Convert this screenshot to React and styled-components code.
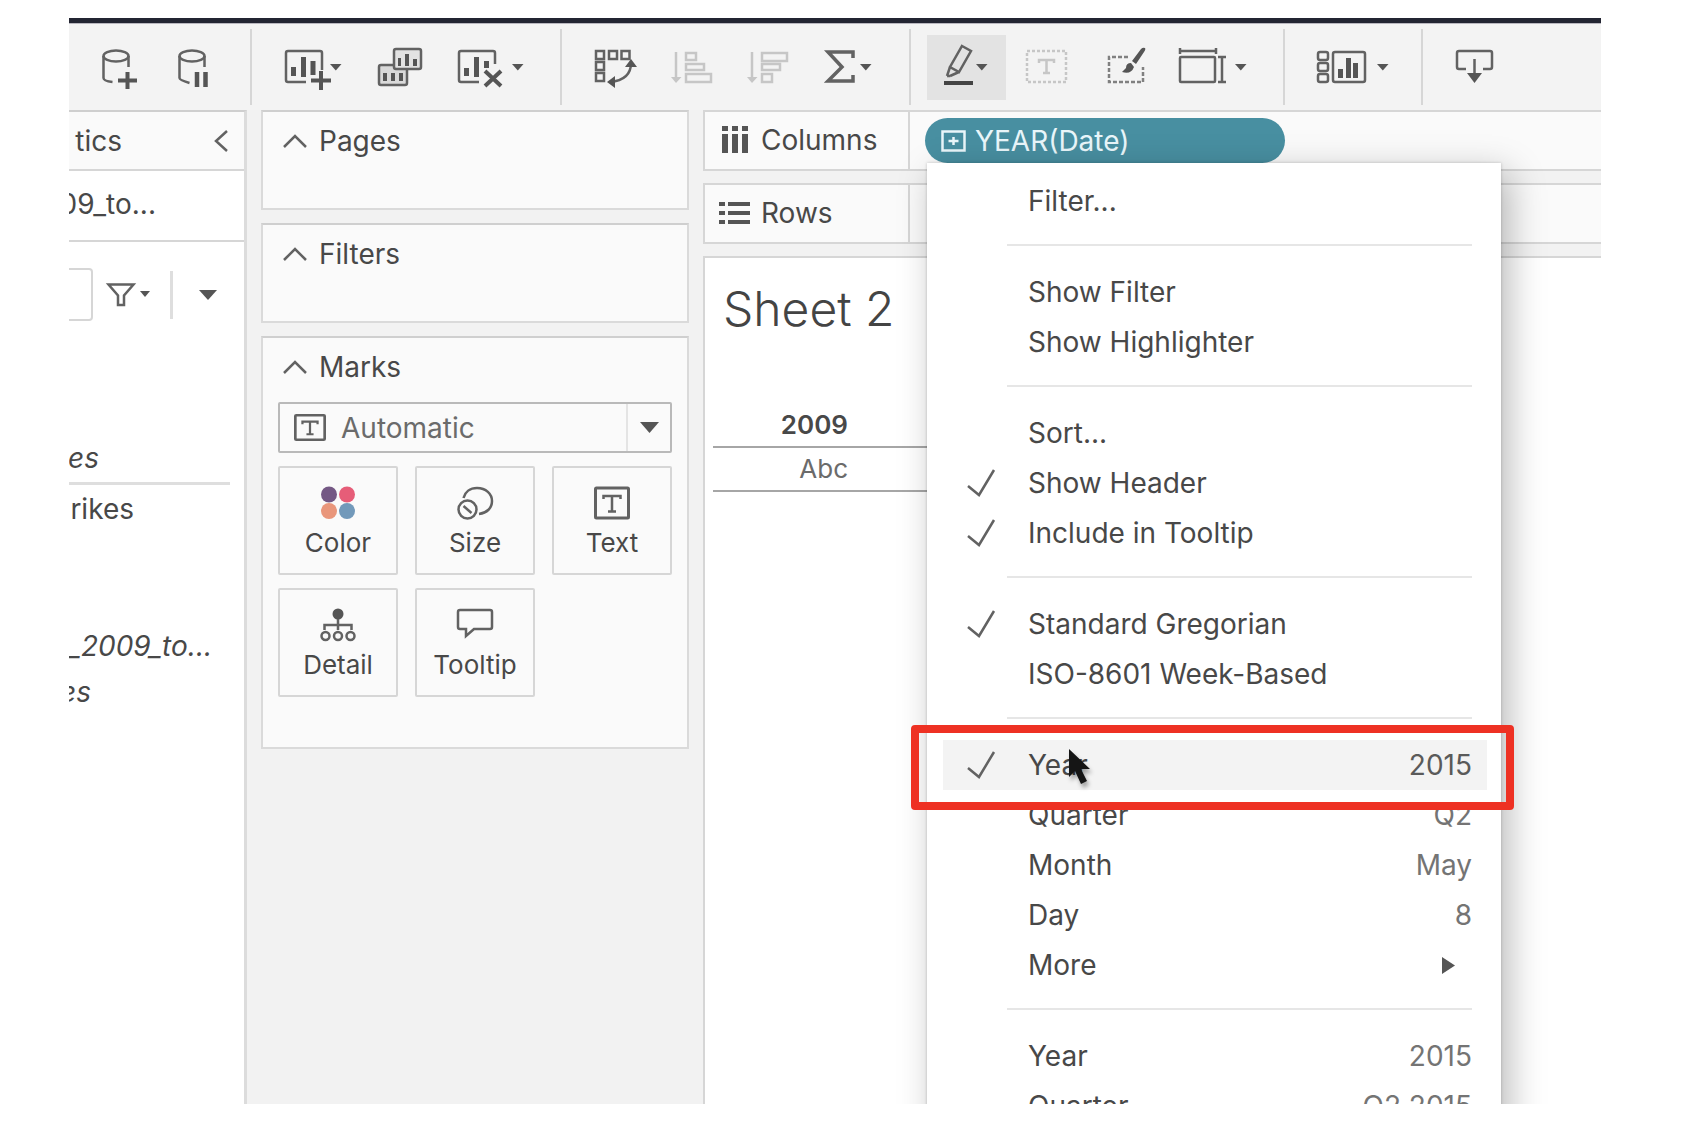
import React from "react";
import styled, { createGlobalStyle, css } from "styled-components";

const ink = "#484848";
const faint = "#c6c6c6";
const line = "#d6d6d6";

const GlobalStyle = createGlobalStyle`
  * { box-sizing: border-box; }
  body { margin: 0; background: #fff; }
  button, select, input, table { font: inherit; color: inherit; }
`;

const Frame = styled.div`
  display: flex;
  flex-direction: column;
  height: calc(100vh - 44px);
  margin: 18px 81px 26px 69px;
  overflow: hidden;
  background: #f2f2f2;
  border-top: 5px solid #232532;
  color: ${ink};
  font-family: Inter, "Liberation Sans", sans-serif;
  font-size: 28px;
  line-height: 34px;
`;

/* Toolbar */

const Toolbar = styled.header`
  display: flex;
  align-items: center;
  flex: none;
  height: 87px;
  border-top: 1px solid #b9b7bf;
  background: #f3f3f3;
`;

const ToolGroup = styled.div`
  display: flex;
  align-items: center;
  height: 76px;
  padding: 0 ${(p) => p.$end}px 0 ${(p) => p.$start}px;
  border-right: ${(p) => (p.$last ? "0" : `2px solid ${line}`)};
`;

const ToolButton = styled.button`
  display: flex;
  align-items: center;
  height: 65px;
  padding: 0 17px;
  border: 0;
  background: ${(p) => (p.$active ? "#e3e3e3" : "transparent")};
`;

const Glyph = styled.svg`
  display: block;
  flex: none;
  fill: none;
  stroke: ${(p) => p.$tone || "#626262"};
  stroke-width: 2.5;
  overflow: visible;
  .solid { fill: ${(p) => p.$tone || "#555"}; stroke: none; }
`;

const Tool = ({ label, w, active, tone, children }) => (
  <ToolButton type="button" aria-label={label} $active={active}>
    <Glyph width={w} height="44" viewBox={`0 0 ${w} 44`} $tone={tone}>
      {children}
    </Glyph>
  </ToolButton>
);

const Caret = ({ x }) => (
  <path className="solid" d={`M${x} 19h11.5l-5.7 6.5z`} />
);

/* Workspace columns */

const Workspace = styled.main`
  display: flex;
  flex: 1;
  min-height: 0;
`;

const DataPane = styled.aside`
  display: flex;
  flex-direction: column;
  flex: none;
  width: 178px;
  border-top: 2px solid #cfcfcf;
  border-right: 3px solid #dcdcdc;
  background: #fff;
  overflow: hidden;
`;

const PaneRow = styled.div`
  display: flex;
  align-items: center;
  justify-content: space-between;
  height: ${(p) => p.$h}px;
  padding: 0 16px ${(p) => (p.$shade ? 0 : 4)}px 0;
  border-bottom: 2px solid ${line};
  background: ${(p) => (p.$shade ? "#fafafa" : "#fff")};
`;

const Clip = styled.span`
  display: flex;
  justify-content: flex-end;
  flex: none;
  width: ${(p) => p.$w}px;
  overflow: hidden;
  font-style: ${(p) => (p.$italic ? "italic" : "normal")};
  white-space: nowrap;
`;

const IconButton = styled.button`
  display: flex;
  align-items: center;
  justify-content: center;
  padding: 0;
  border: 0;
  background: transparent;
`;

const SearchRow = styled.div`
  display: flex;
  align-items: center;
  height: 53px;
  margin-top: 26px;
`;

const SearchBox = styled.input`
  width: 24px;
  height: 53px;
  padding: 0;
  border: 2px solid ${line};
  border-left: 0;
  border-radius: 0 4px 4px 0;
  background: #fff;
`;

const FilterButton = styled(IconButton)`
  margin-left: 14px;
`;

const ViewButton = styled(IconButton)`
  height: 48px;
  margin-left: 19px;
  padding-left: 26px;
  border-left: 3px solid #dedede;
`;

const FieldList = styled.ul`
  display: flex;
  flex-direction: column;
  margin: 117px 14px 0 0;
  padding: 0;
  list-style: none;
`;

const Field = styled.li`
  display: flex;
  align-items: center;
  height: ${(p) => p.$h}px;
  padding-bottom: ${(p) => (p.$ruled ? 4 : 0)}px;
  border-bottom: ${(p) => (p.$ruled ? "3px solid #dedede" : "0")};
`;

const Cards = styled.section`
  display: flex;
  flex-direction: column;
  gap: 13px;
  flex: none;
  width: 428px;
  margin-left: 14px;
`;

const Card = styled.section`
  min-height: 100px;
  padding: 12px 15px ${(p) => (p.$tall ? 50 : 12)}px;
  border: 2px solid #dadada;
  border-top-color: #cfcfcf;
  background: #fafafa;
`;

const CardTitle = styled.h2`
  display: flex;
  align-items: center;
  gap: 12px;
  margin: 0;
  padding-left: 5px;
  font-size: 28px;
  font-weight: 400;
`;

const MarkType = styled.label`
  display: flex;
  align-items: center;
  height: 51px;
  margin-top: 18px;
  padding-left: 14px;
  border: 2px solid #b9b9b9;
  border-radius: 2px;
  color: #6b6b6b;
`;

const MarkSelect = styled.select`
  flex: 1;
  min-width: 0;
  margin-left: 15px;
  padding: 0;
  border: 0;
  appearance: none;
  background: transparent;
`;

const SelectArrow = styled.span`
  display: flex;
  align-items: center;
  justify-content: center;
  width: 44px;
  height: 47px;
  border-left: 2px solid #e4e4e4;
`;

const MarkGrid = styled.div`
  display: grid;
  grid-template-columns: repeat(3, 1fr);
  gap: 13px 17px;
  margin-top: 13px;
`;

const MarkButton = styled.button`
  display: flex;
  flex-direction: column;
  align-items: center;
  gap: 7px;
  height: 109px;
  padding: 18px 0 0;
  border: 2px solid ${line};
  border-radius: 2px;
  background: #fafafa;
  font-size: 26px;
  line-height: 32px;
`;

/* Shelves and sheet */

const Canvas = styled.section`
  display: flex;
  flex-direction: column;
  gap: 12px;
  flex: 1;
  min-width: 0;
  margin-left: 14px;
`;

const Shelf = styled.div`
  display: flex;
  flex: none;
  height: 61px;
  border: 2px solid ${line};
  border-right: 0;
  background: #fafafa;
`;

const ShelfLabel = styled.div`
  display: flex;
  align-items: center;
  gap: 10px;
  width: 205px;
  padding: 0 0 2px 14px;
  border-right: 2px solid ${line};
`;

const ShelfDrop = styled.div`
  flex: 1;
  padding: 6px 0 0 15px;
`;

const PillAnchor = styled.div`
  position: relative;
  width: 360px;
`;

const Pill = styled.button`
  display: flex;
  align-items: center;
  gap: 9px;
  width: 100%;
  height: 45px;
  padding: 0 16px;
  border: 0;
  border-radius: 23px;
  background: #488fa1;
  color: #e9f6fa;
`;

const Sheet = styled.section`
  flex: 1;
  padding: 20px 0 0 8px;
  border: 2px solid ${line};
  border-right: 0;
  border-bottom: 0;
  background: #fff;
`;

const SheetTitle = styled.h1`
  margin: 0 0 63px;
  padding-left: 10px;
  color: #444;
  font-size: 48px;
  font-weight: 300;
  line-height: 62px;
`;

const Crosstab = styled.table`
  border-collapse: collapse;
  width: 290px;
  table-layout: fixed;
  font-size: 26px;
  text-align: right;
  th, td { height: 44px; padding: 0 10px 0 0; border-bottom: 2px solid #a6a6a6; }
  th { font-weight: 600; }
  td { color: #6b6b6b; }
`;

/* Context menu */

const Menu = styled.ul`
  position: absolute;
  z-index: 2;
  top: 100%;
  left: 2px;
  width: 574px;
  margin: 0;
  padding: 13px 14px 13px 16px;
  background: #fff;
  box-shadow: 0 0 3px rgba(0, 0, 0, 0.2), 8px 10px 34px rgba(0, 0, 0, 0.28);
  list-style: none;
`;

const MenuRow = styled.li`
  position: relative;
`;

const MenuItem = styled.button`
  display: grid;
  grid-template-columns: 61px 1fr auto;
  align-items: center;
  width: 100%;
  height: 50px;
  padding: 0 15px 0 24px;
  border: 0;
  background: ${(p) => (p.$hover ? "#f3f3f3" : "transparent")};
  text-align: left;
`;

const MenuValue = styled.span`
  padding-right: ${(p) => (p.$arrow ? "17px" : "0")};
  color: ${(p) => (p.$strong ? "#5a5a5a" : "#747474")};
`;

const MenuRule = styled.li`
  height: 2px;
  margin: 18px 15px 21px 64px;
  background: #e6e6e6;
`;

const overlay = css`
  position: absolute;
  pointer-events: none;
`;

const Callout = styled.div`
  ${overlay}
  z-index: 1;
  inset: -15px -27px -20px -32px;
  border: 8px solid #ee3123;
  border-radius: 4px;
`;

const Pointer = styled.svg`
  ${overlay}
  top: 9px;
  left: 125px;
  filter: drop-shadow(2px 4px 2px rgba(0, 0, 0, 0.35));
`;

const menu = [
  { label: "Filter..." },
  null,
  { label: "Show Filter" },
  { label: "Show Highlighter" },
  null,
  { label: "Sort..." },
  { label: "Show Header", checked: true },
  { label: "Include in Tooltip", checked: true },
  null,
  { label: "Standard Gregorian", checked: true },
  { label: "ISO-8601 Week-Based" },
  null,
  { label: "Year", checked: true, value: "2015", current: true },
  { label: "Quarter", value: "Q2" },
  { label: "Month", value: "May" },
  { label: "Day", value: "8" },
  { label: "More", submenu: true },
  null,
  { label: "Year", value: "2015" },
  { label: "Quarter", value: "Q2 2015" },
];

const Check = () => (
  <Glyph width="28" height="28" viewBox="0 0 28 28">
    <path d="M1 17l11 9L27 1" />
  </Glyph>
);

const TextGlyph = ({ w, h }) => (
  <Glyph width={w} height={h} viewBox="0 0 36 32" preserveAspectRatio="none">
    <rect x="1.5" y="1.5" width="33" height="29" rx="1" strokeWidth="3" />
    <path d="M9.5 12V9h17v3M18 9v15M14 24h8" />
  </Glyph>
);

const Chevron = () => (
  <Glyph width="24" height="14" viewBox="0 0 24 14">
    <path d="M1 13L12 2l11 11" />
  </Glyph>
);

const markButtons = [
  {
    label: "Color",
    icon: (
      <g stroke="none">
        <circle cx="9" cy="8.5" r="8" fill="#745884" />
        <circle cx="27" cy="8.5" r="8" fill="#e65d78" />
        <circle cx="9" cy="25" r="8" fill="#e9967b" />
        <circle cx="27" cy="25" r="8" fill="#7299ba" />
      </g>
    ),
  },
  {
    label: "Size",
    icon: (
      <>
        <circle cx="10.5" cy="23.5" r="9" />
        <path d="M6.5 20l8 7" />
        <path d="M6.500 12C8 6 13 2 20 2c9 0 15 6 15 13 0 7-5 12-13 13" />
      </>
    ),
  },
  {
    label: "Text",
    icon: (
      <>
        <rect x="1.5" y="2" width="33" height="30" rx="1" strokeWidth="3" />
        <path d="M9.5 13v-3h17v3M18 10v15M14 25.500h8" />
      </>
    ),
  },
  {
    label: "Detail",
    icon: (
      <>
        <circle className="solid" cx="18" cy="6" r="5.5" />
        <path d="M18 11v11M4.5 22v-5h27v5" />
        <circle cx="5.500" cy="28" r="4" />
        <circle cx="18" cy="28" r="4" />
        <circle cx="30.5" cy="28" r="4" />
      </>
    ),
  },
  {
    label: "Tooltip",
    icon: <path d="M3 2h30q2 0 2 2v15q0 2-2 2H17l-8 7v-7H3q-2 0-2-2V4q0-2 2-2z" />,
  },
];

const ToolbarIcons = () => (
  <Toolbar>
    <ToolGroup $start={16} $end={19}>
      <Tool label="New Data Source" w={42}>
        <ellipse cx="14" cy="11" rx="12.5" ry="5.5" />
        <path d="M1.5 11v22q0 3 9 4M26.5 11v11" />
        <path d="M16 35.5h19M25.5 27v17" strokeWidth="4" stroke="#555" />
      </Tool>
      <Tool label="Pause Auto Updates" w={36}>
        <ellipse cx="14" cy="11" rx="12.5" ry="5.5" />
        <path d="M1.5 11v22q0 2 10 5M26.5 11v11" />
        <path d="M19 27v15M27.5 27v15" strokeWidth="4.5" stroke="#555" />
      </Tool>
    </ToolGroup>
    <ToolGroup $start={14} $end={20}>
      <Tool label="New Worksheet" w={60}>
        <path d="M23 37H5q-2 0-2-2V8q0-2 2-2h32q2 0 2 2v17" />
        <path className="solid" d="M8 22h5v9H8zM18 12h5v20h-5zM27.5 16h5v14h-5z" />
        <path d="M28 35.5h20M38 26v19" strokeWidth="4" stroke="#555" />
        <Caret x={47} />
      </Tool>
      <Tool label="Duplicate" w={46}>
        <rect x="2" y="20" width="28" height="20" rx="2" fill="#d9d9d9" />
        <rect x="17" y="4" width="27" height="20" rx="2" fill="#e2e2e2" />
        <path className="solid" d="M21 13h3v8h-3zM28 9h4v12h-4zM36 14h4v7h-4zM6 28h4v8H6zM14 28h4v8h-4zM22 28h4v8h-4z" />
      </Tool>
      <Tool label="Clear Sheet" w={66}>
        <path d="M22 37H4q-2 0-2-2V8q0-2 2-2h32q2 0 2 2v11" />
        <path className="solid" d="M7 23h5v8H7zM17 12h5v20h-5zM27 16h5v7h-5z" />
        <path d="M28 26l16 15M44 26L28 41" strokeWidth="4" stroke="#555" />
        <Caret x={55} />
      </Tool>
    </ToolGroup>
    <ToolGroup $start={16} $end={19}>
      <Tool label="Swap Rows and Columns" w={42}>
        <path d="M1 6h8v8H1zM14 6h8v8h-8zM26.5 6h8v8h-8zM1 17h8v8H1zM1 28h8v8H1z" />
        <path d="M36 18q0 17-21 19" />
        <path className="solid" d="M36 14l6 8H30zM12 37l8-6v12z" />
      </Tool>
      <Tool label="Sort Ascending" w={42} tone={faint}>
        <path d="M5 7v28M15 8h10v7H15zM15 19h18v6H15zM15 29h25v8H15z" />
        <path className="solid" d="M0 32h10.5l-5.5 6z" />
      </Tool>
      <Tool label="Sort Descending" w={44} tone={faint}>
        <path d="M5 7v28M15 8h25v8H15zM15 19h18v6H15zM15 29h10v8H15z" />
        <path className="solid" d="M0 32h10.5l-5.5 6z" />
      </Tool>
      <Tool label="Totals" w={48}>
        <path d="M28 13V7H3l14 15L3 36h25v-6" strokeWidth="3.5" />
        <Caret x={35} />
      </Tool>
    </ToolGroup>
    <ToolGroup $start={16} $end={19}>
      <Tool label="Highlight" w={45} active>
        <path d="M18 1l9 5-12 21-9-5zM6 22l-3 9M15 27l-9 4M3 31h3" />
        <path d="M0 38h29" strokeWidth="4" stroke="#444" />
        <Caret x={32} />
      </Tool>
      <Tool label="Show Mark Labels" w={46} tone={faint}>
        <rect x="4" y="6" width="39" height="31" strokeDasharray="3 2" />
        <path d="M16 18v-3h15v3M23.5 15v13M20 28h7" />
      </Tool>
      <Tool label="Format Workbook" w={42}>
        <path d="M25 12H6v25h34V22" strokeDasharray="4 2" stroke="#808080" />
        <path className="solid" d="M42 3q-2-1-4 1l-9 12 4 3 8-12q2-3 1-4zM28 18q-5 0-5 5l-4 4q9 3 12-5z" />
      </Tool>
      <Tool label="Fit" w={68}>
        <path d="M1 6h36M1 3v6M37 3v6M2 12h33q1 0 1 1v23q0 1-1 1H2q-1 0-1-1V13q0-1 1-1zM43 12v25M39 12h8M39 37h8" />
        <Caret x={56} />
      </Tool>
    </ToolGroup>
    <ToolGroup $start={13} $end={15}>
      <Tool label="Show Me Cards" w={74}>
        <rect x="3" y="7" width="10" height="8" rx="2" />
        <rect x="3" y="18" width="10" height="8" rx="2" />
        <rect x="3" y="29" width="10" height="8" rx="2" />
        <rect x="18" y="7" width="32" height="30" rx="2" />
        <path className="solid" d="M23 24h5v9h-5zM31 13h5v20h-5zM38 18h5v15h-5z" />
        <Caret x={62} />
      </Tool>
    </ToolGroup>
    <ToolGroup $start={14} $end={0} $last>
      <Tool label="Download" w={40}>
        <path d="M12 24H5q-2 0-2-2V8q0-2 2-2h31q2 0 2 2v14q0 2-2 2h-7M20.5 14v18" />
        <path className="solid" d="M13 28h15l-7.5 10z" />
      </Tool>
    </ToolGroup>
  </Toolbar>
);

export default function App() {
  return (
    <>
      <GlobalStyle />
      <Frame>
        <ToolbarIcons />
        <Workspace>
          <DataPane>
            <PaneRow $h={59} $shade>
              <Clip $w={53}>tics</Clip>
              <IconButton type="button" aria-label="Collapse pane">
                <Glyph width="14" height="22" viewBox="0 0 14 22">
                  <path d="M13 1L2 11l11 10" />
                </Glyph>
              </IconButton>
            </PaneRow>
            <PaneRow $h={71}>
              <Clip $w={87}>09_to...</Clip>
            </PaneRow>
            <SearchRow>
              <SearchBox aria-label="Search fields" />
              <FilterButton type="button" aria-label="Filter fields">
                <Glyph width="44" height="24" viewBox="0 0 44 24">
                  <path d="M1.5 1.5h25l-9.5 11v9.5h-6v-9.5z" />
                  <path className="solid" d="M33 8h10l-5 6z" />
                </Glyph>
              </FilterButton>
              <ViewButton type="button" aria-label="View options">
                <Glyph width="18" height="10" viewBox="0 0 18 10">
                  <path className="solid" d="M0 0h18L9 10z" />
                </Glyph>
              </ViewButton>
            </SearchRow>
            <FieldList>
              <Field $h={47} $ruled>
                <Clip $w={30} $italic>es</Clip>
              </Field>
              <Field $h={48}>
                <Clip $w={65}>rikes</Clip>
              </Field>
              <Field $h={90} />
              <Field $h={46}>
                <Clip $w={143} $italic>_2009_to...</Clip>
              </Field>
              <Field $h={46}>
                <Clip $w={22} $italic>es</Clip>
              </Field>
            </FieldList>
          </DataPane>

          <Cards>
            <Card>
              <CardTitle><Chevron />Pages</CardTitle>
            </Card>
            <Card>
              <CardTitle><Chevron />Filters</CardTitle>
            </Card>
            <Card $tall>
              <CardTitle><Chevron />Marks</CardTitle>
              <MarkType>
                <TextGlyph w={32} h={27} />
                <MarkSelect aria-label="Mark type" defaultValue="auto">
                  <option value="auto">Automatic</option>
                </MarkSelect>
                <SelectArrow>
                  <Glyph width="19" height="11" viewBox="0 0 19 11">
                    <path className="solid" d="M0 0h19L9.5 11z" />
                  </Glyph>
                </SelectArrow>
              </MarkType>
              <MarkGrid>
                {markButtons.map((m) => (
                  <MarkButton type="button" key={m.label}>
                    <Glyph width="36" height="34" viewBox="0 0 36 34">{m.icon}</Glyph>
                    {m.label}
                  </MarkButton>
                ))}
              </MarkGrid>
            </Card>
          </Cards>

          <Canvas>
            <Shelf>
              <ShelfLabel>
                <Glyph width="32" height="28" viewBox="0 0 32 28">
                  <path className="solid" d="M3 0h6v5H3zM13 0h6v5h-6zM23 0h6v5h-6zM3 8h6v19H3zM13 8h6v19h-6zM23 8h6v19h-6z" />
                </Glyph>
                Columns
              </ShelfLabel>
              <ShelfDrop>
                <PillAnchor>
                  <Pill type="button">
                    <Glyph width="25" height="22" viewBox="0 0 25 22" $tone="#e9f6fa">
                      <rect x="1.5" y="1.5" width="22" height="19" />
                      <path d="M7.5 11h10M12.5 7v8" />
                    </Glyph>
                    YEAR(Date)
                  </Pill>
                  <Menu>
                    {menu.map((item, i) =>
                      item ? (
                        <MenuRow key={i}>
                          <MenuItem type="button" $hover={item.current}>
                            <span>{item.checked && <Check />}</span>
                            <span>{item.label}</span>
                            <MenuValue $arrow={item.submenu} $strong={item.current}>
                              {item.submenu ? (
                                <Glyph width="13" height="17" viewBox="0 0 13 17">
                                  <path className="solid" d="M0 0l13 8.5L0 17z" />
                                </Glyph>
                              ) : (
                                item.value
                              )}
                            </MenuValue>
                          </MenuItem>
                          {item.current && (
                            <>
                              <Callout />
                              <Pointer width="24" height="36" viewBox="0 0 24 36">
                                <path d="M1 0v28l6-6 6 13 6-3-6-12h9z" fill="#151515" />
                              </Pointer>
                            </>
                          )}
                        </MenuRow>
                      ) : (
                        <MenuRule key={i} />
                      )
                    )}
                  </Menu>
                </PillAnchor>
              </ShelfDrop>
            </Shelf>
            <Shelf>
              <ShelfLabel>
                <Glyph width="32" height="24" viewBox="0 0 32 24">
                  <path className="solid" d="M0 1h6v4H0zM9 1h22v4H9zM0 10h6v4H0zM9 10h22v4H9zM0 19h6v4H0zM9 19h22v4H9z" />
                </Glyph>
                Rows
              </ShelfLabel>
              <ShelfDrop />
            </Shelf>
            <Sheet>
              <SheetTitle>Sheet 2</SheetTitle>
              <Crosstab>
                <thead>
                  <tr>
                    <th scope="col">2009</th>
                    <th scope="col">2010</th>
                  </tr>
                </thead>
                <tbody>
                  <tr>
                    <td>Abc</td>
                    <td>Abc</td>
                  </tr>
                </tbody>
              </Crosstab>
            </Sheet>
          </Canvas>
        </Workspace>
      </Frame>
    </>
  );
}
